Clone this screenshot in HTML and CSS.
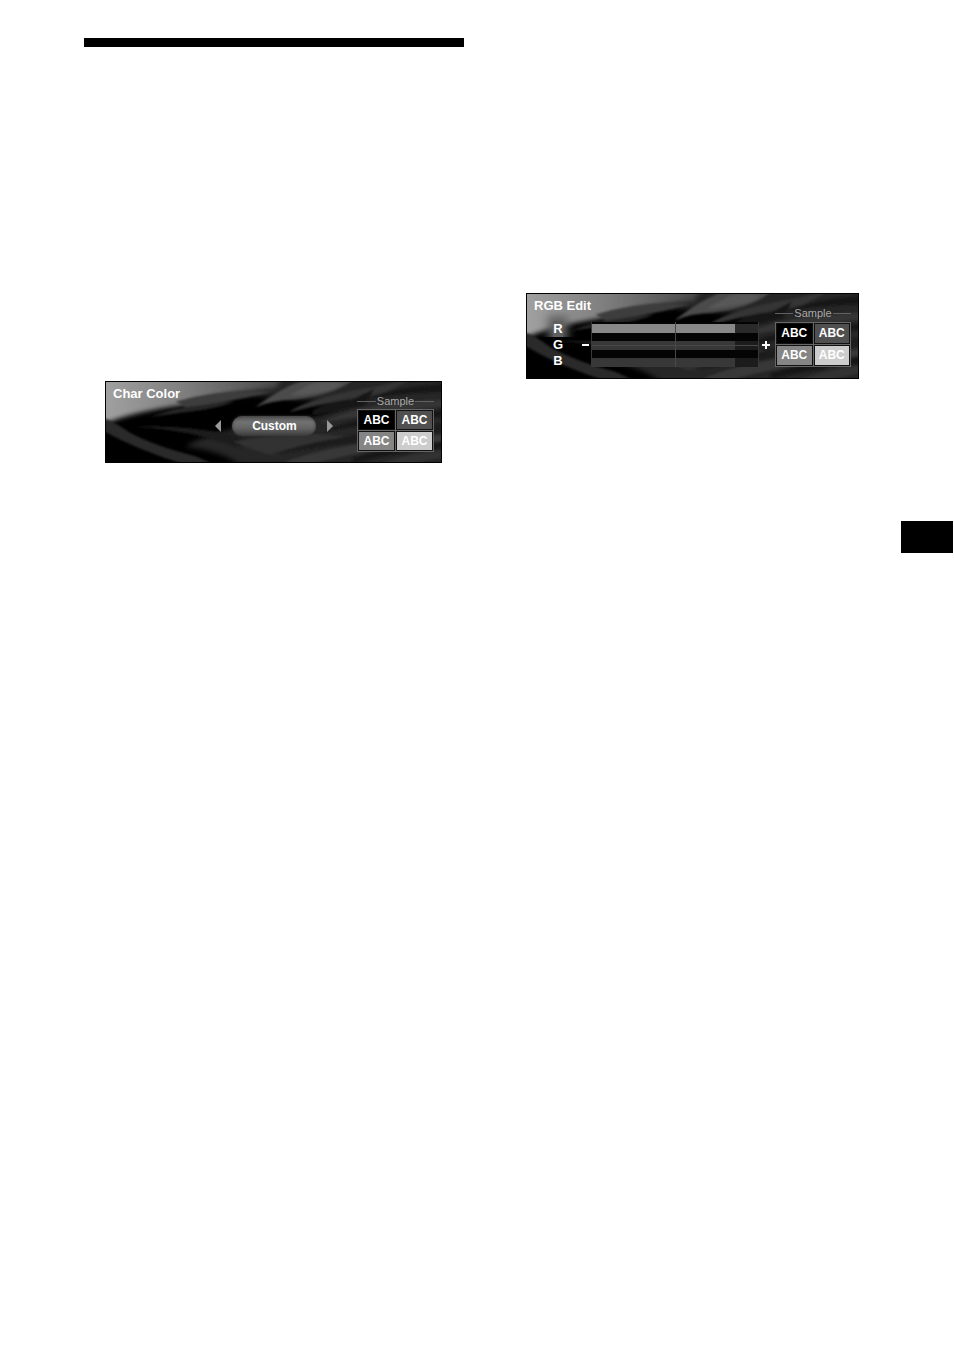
FILE: index.html
```html
<!DOCTYPE html>
<html lang="en">
<head>
<meta charset="utf-8">
<title>Char Color</title>
<link rel="stylesheet" href="styles.css">
</head>
<body>
<svg class="defs" aria-hidden="true">
  <defs>
    <filter id="soft" filterUnits="userSpaceOnUse" x="-40" y="-40" width="420" height="170"><feGaussianBlur stdDeviation="2.5"/></filter>
    <filter id="fine" filterUnits="userSpaceOnUse" x="-40" y="-40" width="420" height="170"><feGaussianBlur stdDeviation="1"/></filter>
    <linearGradient id="glow" gradientUnits="userSpaceOnUse" x1="0" y1="0" x2="190" y2="0"><stop offset="0" stop-color="#a0a0a0"/><stop offset=".4" stop-color="#808080"/><stop offset=".7" stop-color="#606060"/><stop offset="1" stop-color="#404040"/></linearGradient>
    <symbol id="swirl" viewBox="0 0 337 82" preserveAspectRatio="none">
      <rect width="337" height="82" fill="#262626"/>
      <path d="M-20 100V42Q50 16 150 14L240 22Q220 40 130 48Q100 54 80 66Q130 72 150 100Z" fill="#060606" filter="url(#soft)"/>
      <path d="M-20 -20H190L170 6Q110 12 75 24Q30 30 0 42L-20 50Z" fill="url(#glow)" filter="url(#soft)"/>
      <g filter="url(#fine)">
        <path d="M0 38Q10 42 24 52Q50 66 90 76L112 86H84Q30 70 -10 46Z" fill="#2c2c2c"/>
        <path d="M28 46Q70 43 128 54L170 70L130 66Q80 48 28 46Z" fill="#1b1b1b"/>
        <path d="M44 36Q80 22 130 20Q110 28 80 31Z" fill="#252525"/>
        <path d="M70 20Q120 6 166 10Q130 20 80 26Z" fill="#3c3c3c"/>
        <path d="M150 26Q180 3 206 -4H250Q235 12 190 18Q165 19 150 26Z" fill="#4c4c4c"/>
        <path d="M184 14Q225 12 238 2Q220 -2 206 2Z" fill="#585858"/>
        <path d="M184 31Q205 15 270 5L310 -4L280 11Q235 18 184 31Z" fill="#363636"/>
        <path d="M208 29Q230 18 248 18L270 7L260 24Q230 30 208 34Z" fill="#141414"/>
        <path d="M260 19Q288 5 340 2V10Q280 12 260 19Z" fill="#181818"/>
        <path d="M214 42Q260 20 340 18V25Q270 32 214 42Z" fill="#363636"/>
        <path d="M220 51Q255 33 340 29V35Q260 42 220 51Z" fill="#151515"/>
        <path d="M128 61Q190 48 250 57Q200 62 170 76Q145 70 128 61Z" fill="#303030"/>
        <path d="M165 75Q220 55 340 43V51Q245 61 165 75Z" fill="#1a1a1a"/>
        <path d="M180 82Q230 62 340 54V60Q260 69 200 86Z" fill="#383838"/>
        <path d="M248 78Q290 64 340 62V68Q300 71 248 83Z" fill="#141414"/>
        <path d="M268 86Q310 72 340 70V77L300 86Z" fill="#313131"/>
      </g>
    </symbol>
  </defs>
</svg>
<main class="page">
  <section class="column column-left">
    <div class="rule"></div>
    <form class="panel panel-color">
      <svg class="art" aria-hidden="true"><use href="#swirl" width="100%" height="100%"/></svg>
      <div class="settings">
        <h2 class="title">Char Color</h2>
        <div class="picker">
          <button class="arrow" type="button" aria-label="Previous color"><svg width="6" height="12" viewBox="0 0 6 12"><path d="M6 0V12L0 6Z"/></svg></button>
          <output class="choice">Custom</output>
          <button class="arrow" type="button" aria-label="Next color"><svg width="6" height="12" viewBox="0 0 6 12"><path d="M0 0V12L6 6Z"/></svg></button>
        </div>
      </div>
      <div class="sample">
        <div class="sample-title">Sample</div>
        <div class="swatches"><span class="swatch black">ABC</span><span class="swatch dark">ABC</span><span class="swatch mid">ABC</span><span class="swatch light">ABC</span></div>
      </div>
    </form>
  </section>
  <section class="column column-right">
    <form class="panel panel-rgb">
      <svg class="art" aria-hidden="true"><use href="#swirl" width="100%" height="100%"/></svg>
      <div class="settings">
        <h2 class="title">RGB Edit</h2>
        <div class="mixer">
          <div class="names"><label class="selected" for="red">R</label><label for="green">G</label><label for="blue">B</label></div>
          <span class="sign"><svg width="7" height="9" viewBox="0 0 7 9"><path d="M0 4H7V6H0Z"/></svg></span>
          <div class="sliders">
            <input class="slider active" id="red" type="range" min="0" max="100" value="86">
            <input class="slider" id="green" type="range" min="0" max="100" value="86">
            <input class="slider" id="blue" type="range" min="0" max="100" value="86">
          </div>
          <span class="sign"><svg width="8" height="9" viewBox="0 0 8 9"><path d="M3 1H5V4H8V6H5V9H3V6H0V4H3Z"/></svg></span>
        </div>
      </div>
      <div class="sample">
        <div class="sample-title">Sample</div>
        <div class="swatches"><span class="swatch black">ABC</span><span class="swatch dark">ABC</span><span class="swatch mid">ABC</span><span class="swatch light">ABC</span></div>
      </div>
    </form>
  </section>
  <div class="tab"></div>
</main>
</body>
</html>
```
FILE: styles.css
```css
* { box-sizing: border-box; }
body { margin: 0; background: #fff; font-family: "Liberation Sans", Arial, sans-serif; }
.defs { position: absolute; width: 0; height: 0; }
.page {
  display: grid;
  grid-template-columns: 84fr 380fr 62fr 333fr 42fr 52fr 1fr;
  align-items: start;
  min-height: 100vh;
}
.column-left { grid-column: 2; padding-top: 38px; }
.column-right { grid-column: 4; padding-top: 293px; }
.rule { height: 9px; background: #000; }
.tab { grid-column: 6; height: 32px; margin-top: 521px; background: #000; }

.panel {
  position: relative;
  display: grid;
  grid-template-columns: 1fr 77px;
  border: 1px solid #000;
  padding: 0 7px;
  color: #fff;
  background: #111;
  overflow: hidden;
}
.panel-color { margin: 334px 22px 0 21px; padding-bottom: 10px; }
.panel-rgb { grid-template-columns: 1fr 76px; padding-bottom: 9px; }
.art { position: absolute; inset: 0; width: 100%; height: 100%; }
.settings, .sample { position: relative; }
.title { margin: 0; font-size: 13px; font-weight: bold; line-height: 24px; }

.picker { display: flex; justify-content: space-between; align-items: center; width: 118px; margin: 10px 0 0 42%; }
.arrow { display: flex; border: 0; padding: 0; background: none; fill: #999; }
.choice {
  width: 84px;
  border-radius: 10px;
  text-align: center;
  font-size: 12px;
  font-weight: bold;
  line-height: 20px;
  background: linear-gradient(#505050, #727272 30%, #646464 60%, #3c3c3c);
  box-shadow: inset 0 0 3px #383838, 0 0 3px #303030;
}

.sample { padding-top: 11px; }
.sample-title { display: flex; align-items: center; gap: 1px; font-size: 11px; line-height: 16px; color: #aaa; }
.sample-title::before, .sample-title::after { content: ""; flex: 1; height: 1px; background: #606060; }
.swatches { display: grid; grid-template-columns: 1fr 1fr; gap: 1px; border: 1px solid #666; background: #666; }
.swatch { border: 1px solid #111; text-align: center; font-size: 12px; font-weight: bold; line-height: 18px; }
.panel-rgb .sample-title { line-height: 17px; }
.panel-rgb .swatch { line-height: 19px; }
.black { background: #000; }
.dark { background: #505050; }
.mid { background: #858585; }
.light { background: #ccc; }

.mixer { display: flex; align-items: center; margin: 2px 5px 0 19px; }
.names { display: grid; flex: 0 0 29px; padding-top: 1px; font-size: 13px; font-weight: bold; line-height: 16px; }
.names label { width: 10px; text-align: center; }
.names .selected { background: #606060; box-shadow: 0 0 8px 5px #606060; clip-path: inset(-12px -16px 0 -20px); }
.sign { display: flex; fill: #fff; }
.sliders {
  position: relative;
  flex: 1;
  min-width: 0;
  display: grid;
  gap: 8px;
  margin: 0 3px 0 2px;
  padding: 2px 0 0;
  border: solid #383838;
  border-width: 0 1px;
  background: #040404;
}
.sliders::before { content: ""; position: absolute; z-index: 1; left: 50%; top: 0; bottom: 0; width: 1px; background: #484848; }
.sliders::after { content: ""; position: absolute; left: 0; right: 0; top: 50%; height: 1px; background: #484848; }
.slider {
  appearance: none;
  width: 100%;
  height: 9px;
  margin: 0;
  background: linear-gradient(90deg, #383838 86%, #1c1c1c 86%);
}
.slider.active { background: linear-gradient(90deg, #888 86%, #2a2a2a 86%); }
.slider::-webkit-slider-thumb { appearance: none; width: 1px; height: 8px; background: transparent; }
```
